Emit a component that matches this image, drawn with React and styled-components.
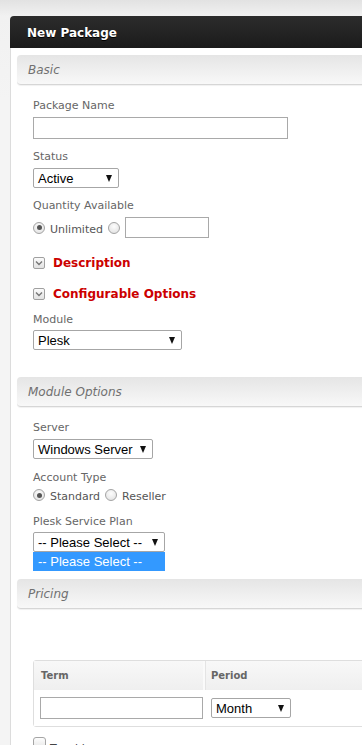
import React from "react";
import styled, { createGlobalStyle } from "styled-components";

const GlobalStyle = createGlobalStyle`
  html, body { margin: 0; padding: 0; overflow: hidden; }
  body {
    background: linear-gradient(#e2e2e2 0px, #f1f1f1 16px, #f4f4f4 100px) no-repeat, #f4f4f4;
    font-family: "DejaVu Sans", Verdana, sans-serif;
  }
`;

const Page = styled.div`
  padding: 16px 0 0 10px;
  height: 745px;
  box-sizing: border-box;
`;

const Panel = styled.div`
  width: 720px;
`;

const PanelTitle = styled.div`
  height: 32px;
  box-sizing: border-box;
  padding: 2px 0 0 17px;
  line-height: 30px;
  border-radius: 4px 4px 0 0;
  background: linear-gradient(#2c2c2c, #1b1b1b);
  color: #fff;
  font-weight: bold;
  font-size: 12px;
  text-shadow: 0 1px 0 #000;
`;

const PanelBody = styled.div`
  background: #fff;
  border-left: 1px solid #dcdcdc;
  padding: 7px 0 0 6px;
  height: 800px;
`;

const SectionHeader = styled.div`
  height: 30px;
  box-sizing: border-box;
  padding: 2px 0 0 11px;
  line-height: 27px;
  border-radius: 4px;
  background: linear-gradient(#e5e5e5, #f8f8f8);
  border-bottom: 1px solid #d6d6d6;
  box-shadow: 0 1px 1px rgba(0, 0, 0, 0.06);
  font-style: italic;
  font-size: 12px;
  color: #707070;
`;

const SectionContent = styled.div`
  display: flex;
  flex-direction: column;
  align-items: flex-start;
  padding: ${(p) => p.$top || 14}px 0 ${(p) => p.$bottom || 27}px 16px;
`;

const Label = styled.div`
  font-size: 11px;
  line-height: 14px;
  color: #666;
  margin-top: ${(p) => p.$mt || 0}px;
`;

const TextBox = styled.div`
  box-sizing: border-box;
  width: ${(p) => p.$w}px;
  height: ${(p) => p.$h || 22}px;
  border: 1px solid #a9a9a9;
  background: #fff;
  margin-top: ${(p) => p.$mt || 0}px;
  margin-left: ${(p) => p.$ml || 0}px;
`;

const SelectWrap = styled.div`
  position: relative;
  margin-top: ${(p) => p.$mt || 0}px;
`;

const Select = styled.div`
  box-sizing: border-box;
  width: ${(p) => p.$w}px;
  height: 20px;
  border: 1px solid #a6a6a6;
  border-radius: 2px;
  background: #fff;
  padding-left: 4px;
  font-family: "Liberation Sans", Arial, sans-serif;
  font-size: 13px;
  line-height: 19px;
  color: #000;
  position: relative;
  white-space: nowrap;
  &::after {
    content: "";
    position: absolute;
    right: 6px;
    top: 6px;
    border-left: 3.5px solid transparent;
    border-right: 3.5px solid transparent;
    border-top: 7px solid #111;
  }
`;

const OptionList = styled.div`
  position: absolute;
  left: 0;
  top: 20px;
  z-index: 5;
  box-sizing: border-box;
  width: ${(p) => p.$w}px;
  height: 19px;
  background: #3399ff;
  color: #fff;
  padding-left: 5px;
  font-family: "Liberation Sans", Arial, sans-serif;
  font-size: 13px;
  line-height: 19px;
  white-space: nowrap;
`;

const RadioRow = styled.div`
  display: flex;
  align-items: center;
  height: ${(p) => p.$h || 16}px;
  margin-top: ${(p) => p.$mt || 0}px;
`;

const Radio = styled.span`
  box-sizing: border-box;
  width: 12px;
  height: 12px;
  border-radius: 50%;
  border: 1px solid #a3a3a3;
  background: radial-gradient(circle at 50% 35%, #fdfdfd, #dedede);
  display: inline-flex;
  align-items: center;
  justify-content: center;
  margin-left: ${(p) => p.$ml || 0}px;
  &::after {
    content: "";
    display: ${(p) => (p.$checked ? "block" : "none")};
    width: 5px;
    height: 5px;
    border-radius: 50%;
    background: #555;
  }
`;

const RadioText = styled.span`
  font-size: 11px;
  color: #555;
  margin-left: 5px;
  padding-top: 3px;
`;

const ToggleRow = styled.div`
  display: flex;
  align-items: center;
  height: 20px;
  margin-top: ${(p) => p.$mt || 0}px;
`;

const ToggleBox = styled.span`
  box-sizing: border-box;
  width: 12px;
  height: 12px;
  border: 1px solid #a0a0a0;
  border-radius: 2px;
  background: linear-gradient(#fbfbfb, #e2e2e2);
  display: inline-flex;
  align-items: center;
  justify-content: center;
`;

const ToggleText = styled.span`
  margin-left: 8px;
  font-size: 12px;
  font-weight: bold;
  color: #cc0000;
`;

const Table = styled.div`
  width: 640px;
  border: 1px solid #dedede;
  border-radius: 3px;
  box-sizing: border-box;
`;

const TableRow = styled.div`
  display: grid;
  grid-template-columns: 171px 1fr;
  background: ${(p) => (p.$head ? "linear-gradient(#f8f8f8, #efefef)" : "#fff")};
  height: ${(p) => p.$h}px;
  align-items: center;
`;

const HeadCell = styled.div`
  height: 100%;
  display: flex;
  align-items: center;
  padding-left: ${(p) => p.$pl}px;
  font-size: 10px;
  font-weight: bold;
  color: #666;
  border-right: ${(p) => (p.$divider ? "2px solid #fafafa" : "none")};
  box-shadow: ${(p) => (p.$divider ? "1px 0 0 #e4e4e4" : "none")};
`;

const BodyCell = styled.div`
  padding-left: ${(p) => p.$pl}px;
  display: flex;
  align-items: center;
`;

const CheckRow = styled.div`
  display: flex;
  align-items: flex-start;
  margin-top: 10px;
`;

const CheckBox = styled.span`
  box-sizing: border-box;
  width: 13px;
  height: 13px;
  border: 1px solid #a5a5a5;
  border-radius: 3px;
  background: linear-gradient(#fdfdfd, #e4e4e4);
`;

const CheckText = styled.span`
  margin-left: 4px;
  font-size: 11px;
  line-height: 13px;
  color: #444;
  padding-top: 5px;
`;

const Chevron = () => (
  <svg width="8" height="6" viewBox="0 0 8 6">
    <path d="M1 1.5 L4 4.5 L7 1.5" fill="none" stroke="#777" strokeWidth="1.4" />
  </svg>
);

export default function App() {
  return (
    <>
      <GlobalStyle />
      <Page>
        <Panel>
          <PanelTitle>New Package</PanelTitle>
          <PanelBody>
            <SectionHeader>Basic</SectionHeader>
            <SectionContent>
              <Label>Package Name</Label>
              <TextBox $w={255} $mt={4} />
              <Label $mt={11}>Status</Label>
              <SelectWrap $mt={4}>
                <Select $w={86}>Active</Select>
              </SelectWrap>
              <Label $mt={11}>Quantity Available</Label>
              <RadioRow $mt={4} $h={21}>
                <Radio $checked />
                <RadioText>Unlimited</RadioText>
                <Radio $ml={5} />
                <TextBox $w={84} $h={21} $ml={5} />
              </RadioRow>
              <ToggleRow $mt={15}>
                <ToggleBox>
                  <Chevron />
                </ToggleBox>
                <ToggleText>Description</ToggleText>
              </ToggleRow>
              <ToggleRow $mt={11}>
                <ToggleBox>
                  <Chevron />
                </ToggleBox>
                <ToggleText>Configurable Options</ToggleText>
              </ToggleRow>
              <Label $mt={9}>Module</Label>
              <SelectWrap $mt={3}>
                <Select $w={149}>Plesk</Select>
              </SelectWrap>
            </SectionContent>

            <SectionHeader>Module Options</SectionHeader>
            <SectionContent>
              <Label>Server</Label>
              <SelectWrap $mt={4}>
                <Select $w={120}>Windows Server</Select>
              </SelectWrap>
              <Label $mt={12}>Account Type</Label>
              <RadioRow $mt={2}>
                <Radio $checked />
                <RadioText>Standard</RadioText>
                <Radio $ml={5} />
                <RadioText>Reseller</RadioText>
              </RadioRow>
              <Label $mt={12}>Plesk Service Plan</Label>
              <SelectWrap $mt={3}>
                <Select $w={132}>-- Please Select --</Select>
                <OptionList $w={132}>-- Please Select --</OptionList>
              </SelectWrap>
            </SectionContent>

            <SectionHeader>Pricing</SectionHeader>
            <SectionContent $top={51}>
              <Table>
                <TableRow $head $h={29}>
                  <HeadCell $pl={7} $divider>Term</HeadCell>
                  <HeadCell $pl={6}>Period</HeadCell>
                </TableRow>
                <TableRow $h={36}>
                  <BodyCell $pl={6}>
                    <TextBox $w={163} $h={22} />
                  </BodyCell>
                  <BodyCell $pl={6}>
                    <Select $w={80}>Month</Select>
                  </BodyCell>
                </TableRow>
              </Table>
              <CheckRow>
                <CheckBox />
                <CheckText>Taxable</CheckText>
              </CheckRow>
            </SectionContent>
          </PanelBody>
        </Panel>
      </Page>
    </>
  );
}
